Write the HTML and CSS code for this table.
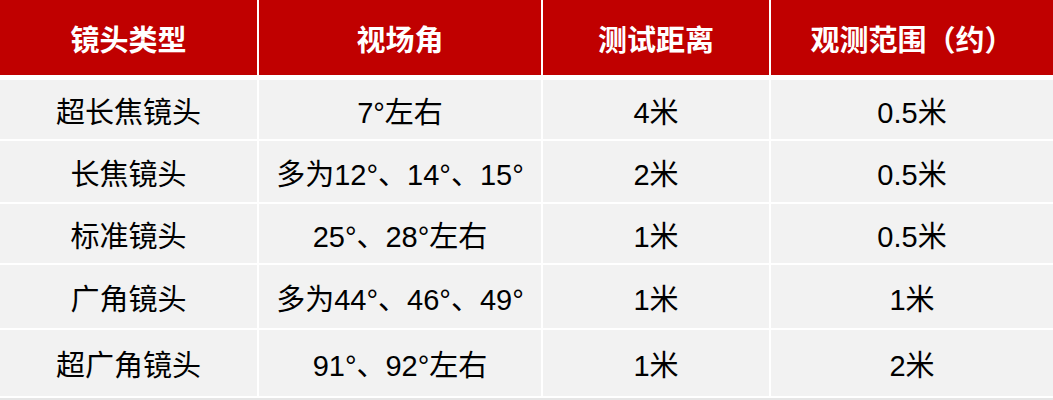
FILE: index.html
```html
<!DOCTYPE html>
<html lang="zh-CN">
<head>
<meta charset="utf-8">
<title>镜头类型</title>
<link rel="stylesheet" href="styles.css">
</head>
<body>
<div class="table">
  <div class="grid head">
    <div class="cell">镜头类型</div>
    <div class="cell">视场角</div>
    <div class="cell">测试距离</div>
    <div class="cell">观测范围（约）</div>
  </div>
  <div class="grid body">
    <div class="cell">超长焦镜头</div>
    <div class="cell">7°左右</div>
    <div class="cell">4米</div>
    <div class="cell">0.5米</div>
    <div class="cell">长焦镜头</div>
    <div class="cell">多为12°、14°、15°</div>
    <div class="cell">2米</div>
    <div class="cell">0.5米</div>
    <div class="cell">标准镜头</div>
    <div class="cell">25°、28°左右</div>
    <div class="cell">1米</div>
    <div class="cell">0.5米</div>
    <div class="cell">广角镜头</div>
    <div class="cell">多为44°、46°、49°</div>
    <div class="cell">1米</div>
    <div class="cell">1米</div>
    <div class="cell">超广角镜头</div>
    <div class="cell">91°、92°左右</div>
    <div class="cell">1米</div>
    <div class="cell">2米</div>
  </div>
  <div class="foot"></div>
</div>
</body>
</html>
```

FILE: styles.css
```css
html, body {
  margin: 0;
  padding: 0;
  background: #ffffff;
}
body {
  width: 1053px;
  height: 400px;
  overflow: hidden;
  font-family: "Liberation Sans", "Noto Sans CJK SC", sans-serif;
  font-size: 29px;
  color: #000000;
}
.grid {
  display: grid;
  grid-template-columns: 257px 282px 226px 1fr;
  column-gap: 2px;
  row-gap: 2px;
}
.cell {
  display: flex;
  align-items: center;
  justify-content: center;
  white-space: nowrap;
}
.head {
  grid-template-rows: 75px;
}
.head .cell {
  background: #c00000;
  color: #ffffff;
  font-weight: bold;
}
.body {
  margin-top: 5px;
  grid-template-rows: 59px 61px 59px 63px 66px;
}
.body .cell {
  background: #f2f2f2;
}
.foot {
  margin-top: 2px;
  height: 2px;
  background: #e6e6e6;
}
```
